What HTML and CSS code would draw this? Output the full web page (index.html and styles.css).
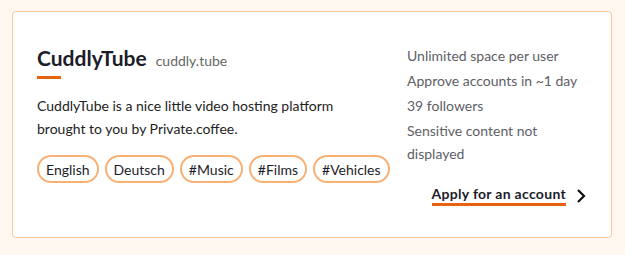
FILE: index.html
```html
<!DOCTYPE html>
<html lang="en">
<head>
  <meta charset="UTF-8" />
  <meta name="viewport" content="width=device-width, initial-scale=1.0"/>
  <title>CuddlyTube</title>
  <link rel="stylesheet" href="styles.css">
</head>
<body>

<div class="card">
  <div class="main">
    <div class="title">
      <h2>CuddlyTube</h2>
      <span class="host">cuddly.tube</span>
    </div>
    <div class="bar"></div>
    <p class="desc">CuddlyTube is a nice little video hosting platform brought to you by Private.coffee.</p>
    <div class="tags">
      <span class="tag">English</span>
      <span class="tag">Deutsch</span>
      <span class="tag">#Music</span>
      <span class="tag">#Films</span>
      <span class="tag">#Vehicles</span>
    </div>
  </div>

  <div class="side">
    <ul class="facts">
      <li>Unlimited space per user</li>
      <li>Approve accounts in ~1 day</li>
      <li>39 followers</li>
      <li>Sensitive content not displayed</li>
    </ul>
    <a class="apply" href="#">
      <span class="apply-text">Apply for an account</span>
      <svg width="12" height="14" viewBox="0 0 12 14"><path d="M3 1 L9 7 L3 13" fill="none" stroke="#111" stroke-width="2.2"/></svg>
    </a>
  </div>
</div>

</body>
</html>
```

FILE: styles.css
```css
body {
  margin: 0; font-family: 'Lato', sans-serif; background: #fff7f0;
  font-size: 14px; color: #222;
}
.card {
  margin: 11px 0 0 12px; width: 600px; height: 227px; box-sizing: border-box;
  background: white; border: 1px solid #fdc896; border-radius: 4px;
  padding: 32px 24px 0 24px;
  display: grid; grid-template-columns: 356px 180px; column-gap: 14px;
}
.title { display: flex; align-items: baseline; gap: 9px; }
.title h2 { margin: 0; font-size: 21px; line-height: 28px; color: #1c1c2a; }
.host { color: #666; font-size: 14px; }
.bar { width: 24px; height: 3px; background: #e8620f; margin-top: 4px; }
.desc { margin: 15px 0 0; line-height: 23px; max-width: 340px; }
.tags { display: flex; gap: 6px; margin-top: 15px; }
.tag {
  border: 2px solid #f9b075; border-radius: 20px;
  padding: 3px 7px 2px; line-height: 19px; color: #1c1c2a;
}
.side { display: flex; flex-direction: column; align-items: flex-end; }
.facts {
  list-style: none; margin: 0; padding: 0; align-self: stretch;
  color: #5e5e66; line-height: 23px;
}
.facts li { margin-bottom: 2px; }
.apply {
  margin-top: 18px; display: flex; align-items: center; gap: 9px;
  text-decoration: none; color: #1c1c2a; font-weight: bold;
}
.apply-text {
  line-height: 18px; border-bottom: 3px solid #e8620f; letter-spacing: 0.3px;
}
```
